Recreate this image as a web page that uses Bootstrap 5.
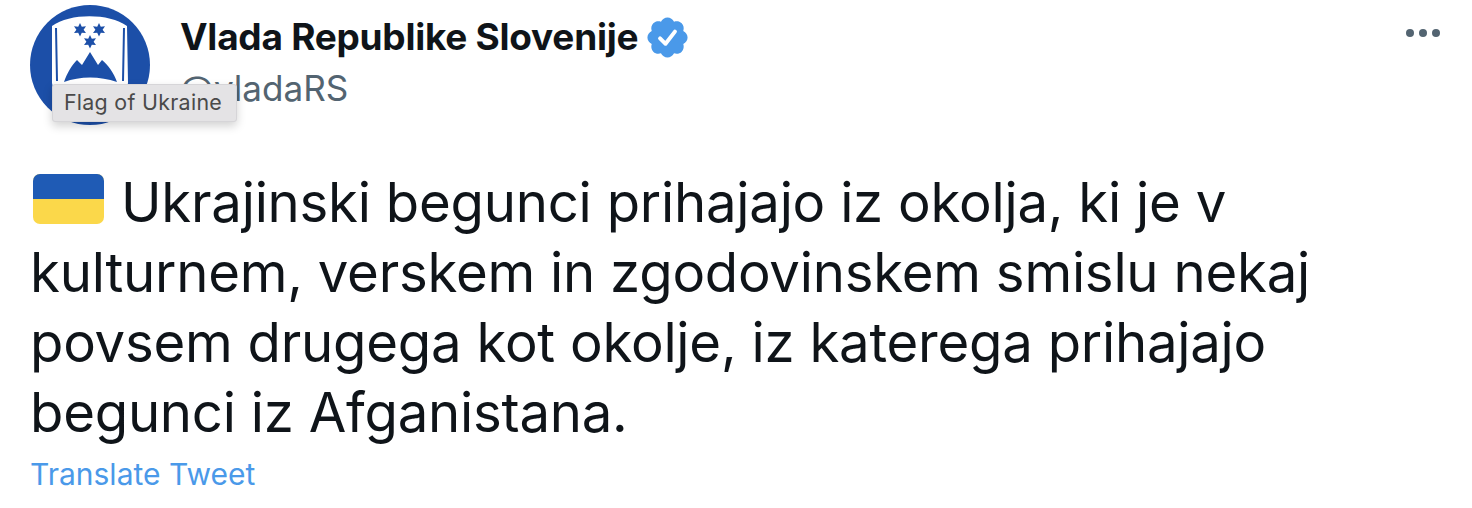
<!doctype html>
<html lang="sl">
<head>
<meta charset="utf-8">
<title>Tweet</title>
<link href="https://cdn.jsdelivr.net/npm/bootstrap@5.3.0/dist/css/bootstrap.min.css" rel="stylesheet">
<style>
html,body{height:508px;overflow:hidden;background:#fff}
body{font-family:Inter,"Liberation Sans",sans-serif;color:#0f1419}
.tw-page{padding:5px 0 0 30px;position:relative;height:508px}
.tw-head{height:120px}
.tw-avatar{width:120px;height:120px;flex:none;display:block}
.tw-meta{margin-left:30px;padding-top:8px}
.tw-name{font-size:37px;line-height:48px;font-weight:700;letter-spacing:-.26px}
.tw-handle{font-size:35.1px;line-height:48px;color:#536471;margin-top:3px}
.tw-verified{width:47px;height:47px;margin-left:6px;flex:none}
.tw-more{margin:24px 32px 0 auto;gap:5px}
.tw-dot{width:8px;height:8px;border-radius:50%;background:#536471}
.tw-tip{position:absolute;left:52px;top:84px;width:185px;height:38px;background:#e4e3e5;border:1px solid #d6d5d8;border-radius:3px;box-shadow:0 4px 10px rgba(0,0,0,.18);font-size:21.4px;line-height:34px;color:#4a4a4a;text-align:center;letter-spacing:.3px;padding-right:3px}
.tw-text{font-size:54.5px;line-height:70px;margin:42px 0 0;width:1290px;letter-spacing:-.23px}
.tw-flag{display:inline-block;width:71px;height:50px;vertical-align:-2px;margin:0 17px 0 3px}
.tw-translate{font-size:30px;line-height:40px;color:#4a99e9;text-decoration:none;display:block;margin-top:7px}
</style>
</head>
<body>
<div class="tw-page">
  <div class="d-flex tw-head">
    <svg class="tw-avatar" viewBox="0 0 120 120">
      <circle cx="60" cy="60" r="60" fill="#1c4fa8"/>
      <path d="M22 21C40 8 79 8 97 21L98 78C96 92 80 100 60 112C40 100 24 92 22 78Z" fill="#fff"/>
      <path d="M26 23L27 76M94 23L93 76" stroke="#1c4fa8" stroke-width="2" fill="none"/>
      <path d="M34 77C37 68 42 60 47 55L52 60L60 47L68 60L72 55C78 60 84 68 87 77C70 71 50 71 34 77Z" fill="#1c4fa8"/>
      <g fill="#1c4fa8">
        <path d="M50 18l1.800 3.700 4.200-.4-2.400 3.400 2.400 3.400-4.200-.4-1.800 3.700-1.800-3.700-4.200.4 2.400-3.400-2.400-3.400 4.200.4z"/>
        <path d="M69 18l1.800 3.700 4.200-.4-2.400 3.400 2.400 3.400-4.200-.4-1.800 3.700-1.800-3.700-4.200.4 2.400-3.400-2.400-3.400 4.200.4z"/>
        <path d="M60 30l1.800 3.700 4.200-.4-2.400 3.400 2.400 3.400-4.200-.4-1.800 3.700-1.800-3.700-4.200.4 2.400-3.400-2.400-3.400 4.200.4z"/>
      </g>
    </svg>
    <div class="tw-meta">
      <div class="tw-name d-flex align-items-center">Vlada Republike Slovenije
        <svg class="tw-verified" viewBox="0 0 24 24"><path fill="#4a99e9" d="M22.25 12c0-1.43-.88-2.67-2.19-3.34.46-1.39.2-2.9-.81-3.91s-2.52-1.27-3.91-.81c-.66-1.31-1.91-2.19-3.34-2.19s-2.67.88-3.33 2.19c-1.4-.46-2.91-.2-3.92.81s-1.26 2.52-.8 3.91C2.63 9.33 1.75 10.57 1.75 12s.88 2.67 2.2 3.34c-.46 1.39-.21 2.9.8 3.91s2.52 1.26 3.91.81c.67 1.31 1.91 2.19 3.34 2.19s2.68-.88 3.34-2.19c1.39.45 2.9.2 3.91-.81s1.27-2.52.81-3.91c1.31-.67 2.19-1.91 2.19-3.34z"/><path fill="none" stroke="#fff" stroke-width="2" stroke-linecap="round" stroke-linejoin="round" d="M8.200 12.400l2.800 2.800 4.800-6.200"/></svg>
      </div>
      <div class="tw-handle">@vladaRS</div>
    </div>
    <div class="tw-more d-flex"><span class="tw-dot"></span><span class="tw-dot"></span><span class="tw-dot"></span></div>
  </div>
  <p class="tw-text"><svg class="tw-flag" viewBox="0 0 71 50"><rect width="71" height="50" rx="7" fill="#fbd84a"/><path d="M0 25V7a7 7 0 0 1 7-7H64a7 7 0 0 1 7 7V25Z" fill="#1f5bb5"/></svg>Ukrajinski begunci prihajajo iz okolja, ki je v kulturnem, verskem in zgodovinskem smislu nekaj povsem drugega kot okolje, iz katerega prihajajo begunci iz Afganistana.</p>
  <a class="tw-translate" href="#">Translate Tweet</a>
  <div class="tw-tip">Flag of Ukraine</div>
</div>
<script src="https://cdn.jsdelivr.net/npm/bootstrap@5.3.0/dist/js/bootstrap.bundle.min.js"></script>
</body>
</html>
